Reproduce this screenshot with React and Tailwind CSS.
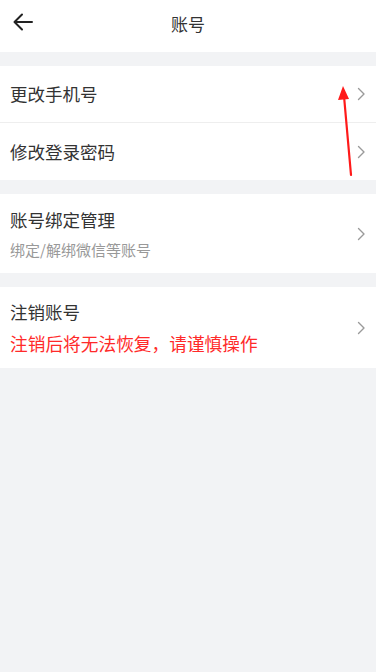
import React from "react";

const font = { fontFamily: '"Noto Sans CJK SC", "Noto Sans", sans-serif' };

const Chevron = () => (
  <svg width="10" height="14" viewBox="0 0 10 14" fill="none" className="shrink-0">
    <path d="M2.5 1.5 L8 7 L2.5 12.5" stroke="#9a9a9a" strokeWidth="1.4" strokeLinecap="round" strokeLinejoin="round" />
  </svg>
);

const Row = ({ title, sub, subClass, className = "" }) => (
  <div className={`flex items-center justify-between bg-white pl-[10px] pr-[10px] ${className}`}>
    <div className="flex flex-col">
      <span className="text-[17.5px] leading-[24px] text-[#333]">{title}</span>
      {sub && <span className={subClass}>{sub}</span>}
    </div>
    <Chevron />
  </div>
);

const App = () => {
  return (
    <div className="relative min-h-[672px] w-full bg-[#f2f3f5]" style={font}>
      <div className="relative flex h-[52px] items-center justify-center bg-white">
        <svg className="absolute left-[12px] top-[12px]" width="22" height="20" viewBox="0 0 22 20" fill="none">
          <path d="M20 10 H3 M10 2.5 L2.5 10 L10 17.5" stroke="#222" strokeWidth="2" strokeLinecap="round" strokeLinejoin="round" />
        </svg>
        <span className="-mt-[4px] text-[17px] text-[#333]">账号</span>
      </div>

      <div className="mt-[14px]">
        <Row title="更改手机号" className="h-[57px] border-b border-[#eeeeee]" />
        <Row title="修改登录密码" className="h-[57px]" />
      </div>

      <div className="mt-[14px]">
        <Row
          title="账号绑定管理"
          sub="绑定/解绑微信等账号"
          subClass="mt-[8px] text-[15px] leading-[20px] text-[#999]"
          className="h-[79px]"
        />
      </div>

      <div className="mt-[14px]">
        <Row
          title="注销账号"
          sub="注销后将无法恢复，请谨慎操作"
          subClass="mt-[7px] text-[17.7px] leading-[24px] text-[#ff2a2a]"
          className="h-[81px]"
        />
      </div>

      <svg className="pointer-events-none absolute left-[334px] top-[82px]" width="24" height="98" viewBox="0 0 24 98" fill="none">
        <path d="M17 93 L10 14" stroke="#ff1a1a" strokeWidth="2.2" strokeLinecap="round" />
        <path d="M9 4 L4 18 L15 17 Z" fill="#ff1a1a" />
      </svg>
    </div>
  );
};

export default App;
